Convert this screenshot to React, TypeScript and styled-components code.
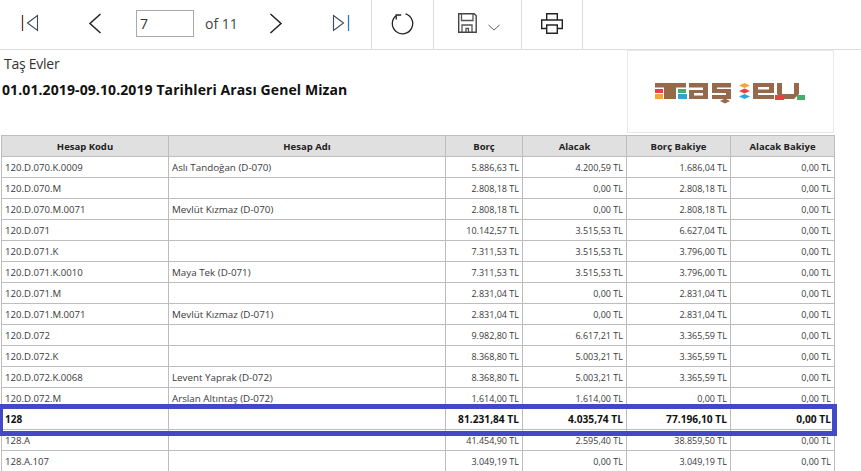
import React from "react";
import styled, { createGlobalStyle } from "styled-components";

const Global = createGlobalStyle`
  html, body { margin: 0; padding: 0; background: #fff; overflow: hidden; }
  body { font-family: "Open Sans", "Noto Sans", sans-serif; color: #222; }
`;
const Page = styled.div`width: 861px; height: 471px; overflow: hidden; display: flex; flex-direction: column; position: relative;`;
const Toolbar = styled.div`
  height: 50px; width: 861px; box-sizing: border-box; flex: none; display: flex; align-items: stretch; border-bottom: 1px solid #dcdcdc;
`;
const Pager = styled.div`width: 371px; display: flex; align-items: center; flex: none; padding-bottom: 3px; box-sizing: border-box;`;
const IconSlot = styled.div<{ $w: number; $ml?: number }>`
  width: ${(p) => p.$w}px; margin-left: ${(p) => p.$ml ?? 0}px; flex: none; display: flex; align-items: center; justify-content: center;
`;
const Section = styled.div<{ $w: number }>`
  width: ${(p) => p.$w}px; flex: none; box-sizing: border-box; border-left: 1px solid #dcdcdc; padding-bottom: 3px;
  display: flex; align-items: center; justify-content: center;
`;
const LastSection = styled(Section)`border-right: 1px solid #dcdcdc;`;
const SaveGroup = styled.div`display: flex; align-items: center; gap: 11px; padding-left: 3px;`;
const ChevronWrap = styled.div`display: flex; margin-top: 8px;`;
const PageInput = styled.div`
  width: 58px; height: 27px; box-sizing: border-box; border: 1px solid #a9a9a9; font-size: 14px; line-height: 26px;
  padding-left: 3px; flex: none; color: #333; margin-left: 6px; margin-top: 1px;
`;
const OfText = styled.span`font-size: 14px; color: #444; margin-left: 11px; width: 44px; flex: none; margin-top: 1px;`;
const Header = styled.div`display: flex; height: 85px; flex: none; box-sizing: border-box;`;
const Titles = styled.div`width: 627px; flex: none; display: flex; flex-direction: column; padding-top: 4px;`;
const Company = styled.div`font-size: 14px; line-height: 19px; color: #333; padding-left: 4px; letter-spacing: -0.25px;`;
const Title = styled.div`font-size: 14px; font-weight: 700; line-height: 19px; color: #111; padding: 7px 0 0 2px; white-space: nowrap; letter-spacing: 0.1px;`;
const LogoBox = styled.div`
  width: 207px; height: 83px; box-sizing: border-box; border: 1px solid #e8e8e8;
  display: flex; align-items: center; justify-content: center; padding-top: 5px;
`;
const Table = styled.table`
  border-collapse: collapse; table-layout: fixed; width: 834px; margin-left: 1px; flex: none;
`;
const Th = styled.th`
  background: #e0e0e0; border: 1px solid #bdbdbd; height: 20px; padding: 0; font-size: 9.5px; font-weight: 700; color: #222; text-align: center;
`;
const Cell = styled.td`
  border: 1px solid #bdbdbd; height: 20px; padding: 0 3px; white-space: nowrap; overflow: hidden; color: #3a3a3a;
`;
const CodeCell = styled(Cell)<{ $bold?: boolean }>`
  font-size: ${(p) => (p.$bold ? "10px" : "9.6px")}; font-weight: ${(p) => (p.$bold ? 700 : 400)};
  color: ${(p) => (p.$bold ? "#111" : "#3a3a3a")};
`;
const NameCell = styled(Cell)`font-size: 9.8px;`;
const NumCell = styled(Cell)<{ $bold?: boolean }>`
  text-align: right; font-size: ${(p) => (p.$bold ? "10.2px" : "9px")}; font-weight: ${(p) => (p.$bold ? 700 : 400)};
  color: ${(p) => (p.$bold ? "#111" : "#3a3a3a")};
`;
const Tr = styled.tr`height: 20px;`;
const Highlight = styled.div`
  position: absolute; left: -2px; top: 404px; width: 839px; height: 32px; box-sizing: border-box; border: 5px solid #4349c6; pointer-events: none;
`;

const rows: [string, string, string, string, string, string, boolean?][] = [
  ["120.D.070.K.0009", "Aslı Tandoğan (D-070)", "5.886,63 TL", "4.200,59 TL", "1.686,04 TL", "0,00 TL"],
  ["120.D.070.M", "", "2.808,18 TL", "0,00 TL", "2.808,18 TL", "0,00 TL"],
  ["120.D.070.M.0071", "Mevlüt Kızmaz (D-070)", "2.808,18 TL", "0,00 TL", "2.808,18 TL", "0,00 TL"],
  ["120.D.071", "", "10.142,57 TL", "3.515,53 TL", "6.627,04 TL", "0,00 TL"],
  ["120.D.071.K", "", "7.311,53 TL", "3.515,53 TL", "3.796,00 TL", "0,00 TL"],
  ["120.D.071.K.0010", "Maya Tek (D-071)", "7.311,53 TL", "3.515,53 TL", "3.796,00 TL", "0,00 TL"],
  ["120.D.071.M", "", "2.831,04 TL", "0,00 TL", "2.831,04 TL", "0,00 TL"],
  ["120.D.071.M.0071", "Mevlüt Kızmaz (D-071)", "2.831,04 TL", "0,00 TL", "2.831,04 TL", "0,00 TL"],
  ["120.D.072", "", "9.982,80 TL", "6.617,21 TL", "3.365,59 TL", "0,00 TL"],
  ["120.D.072.K", "", "8.368,80 TL", "5.003,21 TL", "3.365,59 TL", "0,00 TL"],
  ["120.D.072.K.0068", "Levent Yaprak (D-072)", "8.368,80 TL", "5.003,21 TL", "3.365,59 TL", "0,00 TL"],
  ["120.D.072.M", "Arslan Altıntaş (D-072)", "1.614,00 TL", "1.614,00 TL", "0,00 TL", "0,00 TL"],
  ["128", "", "81.231,84 TL", "4.035,74 TL", "77.196,10 TL", "0,00 TL", true],
  ["128.A", "", "41.454,90 TL", "2.595,40 TL", "38.859,50 TL", "0,00 TL"],
  ["128.A.107", "", "3.049,19 TL", "0,00 TL", "3.049,19 TL", "0,00 TL"],
];
const widths = [167, 277, 77, 104, 104, 104];
const heads = ["Hesap Kodu", "Hesap Adı", "Borç", "Alacak", "Borç Bakiye", "Alacak Bakiye"];

const Stroke = { fill: "none", stroke: "#222", strokeWidth: 1.3 } as const;

const First = () => (
  <svg width="18" height="18" viewBox="0 0 18 18"><path d="M1.500 1v16" {...Stroke} stroke="#6b3a20" /><path d="M16.500 1.500 6.500 9l10 7.500z" {...Stroke} stroke="#3a4a58" strokeWidth={1.1} /></svg>
);
const Prev = () => (
  <svg width="14" height="21" viewBox="0 0 14 21"><path d="M12.500 1 2 10.500 12.500 20" {...Stroke} strokeWidth={1.5} /></svg>
);
const Next = () => (
  <svg width="14" height="21" viewBox="0 0 14 21"><path d="M1.500 1 12 10.500 1.500 20" {...Stroke} strokeWidth={1.5} /></svg>
);
const Last = () => (
  <svg width="18" height="18" viewBox="0 0 18 18"><path d="M16.500 1v16" {...Stroke} stroke="#2a7fb0" /><path d="M1.500 1.500 11.500 9l-10 7.500z" {...Stroke} stroke="#3a4a58" strokeWidth={1.1} /></svg>
);
const Refresh = () => (
  <svg width="23" height="23" viewBox="0 0 23 23"><path d="M14.500 1.800A10.200 10.200 0 1 1 5 3.700" {...Stroke} /><path d="M5.200 7.500V3h5" {...Stroke} /></svg>
);
const Save = () => (
  <svg width="19" height="20" viewBox="0 0 19 20">
    <path d="M.7.700h15.500l2 2v16.500H.7z" {...Stroke} stroke="#444" strokeWidth={1.4} />
    <path d="M3.500 1v6.500h11.500V1" {...Stroke} stroke="#555" />
    <path d="M4 19v-7h10v7M8 19v-3.500h2.500V19" {...Stroke} stroke="#555" />
  </svg>
);
const Chevron = () => (
  <svg width="12" height="7" viewBox="0 0 12 7"><path d="M.5 1 6 6l5.500-5" fill="none" stroke="#55606b" strokeWidth="1" /></svg>
);
const Printer = () => (
  <svg width="22" height="21" viewBox="0 0 22 21">
    <path d="M5.700 7V.7h10.600V7" {...Stroke} strokeWidth={1.4} />
    <path d="M5 15.500H.7V7h20.600v8.500H17" {...Stroke} strokeWidth={1.4} />
    <path d="M5.700 12h10.600v8.300H5.700z" {...Stroke} strokeWidth={1.4} />
  </svg>
);
const Logo = () => (
  <svg width="152" height="22" viewBox="0 0 152 22">
    <defs><filter id="soft" x="-5%" y="-5%" width="110%" height="110%"><feGaussianBlur stdDeviation="0.6" /></filter></defs>
    <g filter="url(#soft)">
      <g fill="#95694a">
        <rect x="0" y="0" width="31" height="4.500" />
        <rect x="9" y="0" width="12" height="16" />
        <path d="M34 0h19v16H34V7h14V4.500H34zM39 10v2.500h9V10z" fillRule="evenodd" />
        <path d="M57 0h19v4.500H62V6h14v10H57v-4h14v-2H57z" />
        <path d="M98 0h21v10h-16v2h16v4H98zM103 4v2.500h11V4z" fillRule="evenodd" />
        <path d="M122 0h5v11h12V0h5v11l-5 5h-12l-5-5z" />
        <path d="M65 18l5-2.500 5 2.500-5 2.500z" />
      </g>
      <rect x="0" y="6" width="8" height="4" fill="#e8433f" />
      <rect x="0" y="11" width="8" height="5" fill="#f5a63b" />
      <rect x="23" y="6" width="8" height="4" fill="#43b06a" />
      <rect x="23" y="11" width="9" height="5" fill="#2fa4dc" />
      <path d="M84 2.500 89.500 0l5.500 2.500-5.500 2.500z" fill="#f5a63b" />
      <path d="M84 8 89.500 5.500 95 8l-5.500 2.500z" fill="#e8433f" />
      <path d="M84 13.500 89.500 11l5.500 2.500-5.500 2.500z" fill="#2fa4dc" />
      <rect x="120" y="12" width="9" height="5" fill="#e8433f" />
      <rect x="142" y="12" width="8" height="5" fill="#43b06a" />
    </g>
  </svg>
);

export default function App() {
  return (
    <Page>
      <Global />
      <Toolbar>
        <Pager>
          <IconSlot $w={60}><First /></IconSlot>
          <IconSlot $w={70}><Prev /></IconSlot>
          <PageInput>7</PageInput>
          <OfText>of 11</OfText>
          <IconSlot $w={53}><Next /></IconSlot>
          <IconSlot $w={20} $ml={29}><Last /></IconSlot>
        </Pager>
        <Section $w={62}><Refresh /></Section>
        <Section $w={88}>
          <SaveGroup><Save /><ChevronWrap><Chevron /></ChevronWrap></SaveGroup>
        </Section>
        <LastSection $w={62}><Printer /></LastSection>
      </Toolbar>
      <Header>
        <Titles>
          <Company>Taş Evler</Company>
          <Title>01.01.2019-09.10.2019 Tarihleri Arası Genel Mizan</Title>
        </Titles>
        <LogoBox><Logo /></LogoBox>
      </Header>
      <Table>
        <colgroup>{widths.map((w, i) => <col key={i} style={{ width: w }} />)}</colgroup>
        <thead><Tr>{heads.map((h) => <Th key={h}>{h}</Th>)}</Tr></thead>
        <tbody>
          {rows.map((r) => (
            <Tr key={r[0]}>
              <CodeCell $bold={r[6]}>{r[0]}</CodeCell>
              <NameCell>{r[1]}</NameCell>
              {r.slice(2, 6).map((v, i) => <NumCell key={i} $bold={r[6]}>{v as string}</NumCell>)}
            </Tr>
          ))}
        </tbody>
      </Table>
      <Highlight />
    </Page>
  );
}
